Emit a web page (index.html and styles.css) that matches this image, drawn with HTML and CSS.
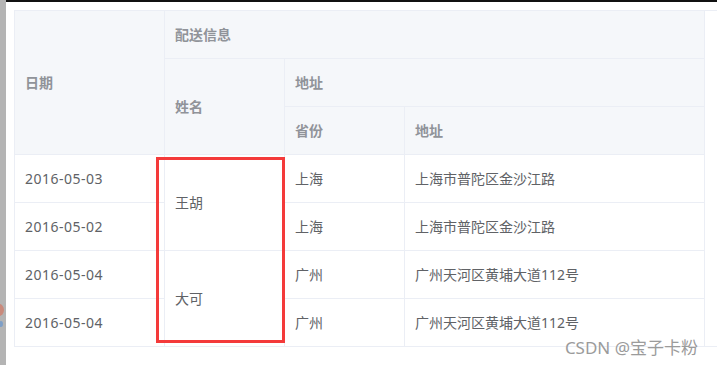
FILE: index.html
```html
<!DOCTYPE html>
<html lang="zh-CN">
<head>
    <meta charset="UTF-8">
    <meta name="viewport" content="width=device-width, initial-scale=1.0">
    <title>配送信息</title>
    <link rel="stylesheet" href="styles.css">
</head>
<body>
    <aside class="side">
        <span class="side-badge"></span>
    </aside>

    <div class="content">
        <div class="topbar"></div>

        <main class="page">
            <div class="table-wrap">
                <table class="data-table">
                    <colgroup>
                        <col class="col-date">
                        <col class="col-name">
                        <col class="col-province">
                        <col class="col-address">
                    </colgroup>
                    <thead>
                        <tr>
                            <th rowspan="3">日期</th>
                            <th colspan="3">配送信息</th>
                        </tr>
                        <tr>
                            <th rowspan="2">姓名</th>
                            <th colspan="2">地址</th>
                        </tr>
                        <tr>
                            <th>省份</th>
                            <th>地址</th>
                        </tr>
                    </thead>
                    <tbody>
                        <tr>
                            <td class="date">2016-05-03</td>
                            <td rowspan="2">王胡</td>
                            <td>上海</td>
                            <td>上海市普陀区金沙江路</td>
                        </tr>
                        <tr>
                            <td class="date">2016-05-02</td>
                            <td>上海</td>
                            <td>上海市普陀区金沙江路</td>
                        </tr>
                        <tr>
                            <td class="date">2016-05-04</td>
                            <td rowspan="2" class="last">大可</td>
                            <td>广州</td>
                            <td>广州天河区黄埔大道112号</td>
                        </tr>
                        <tr class="last-row">
                            <td class="date">2016-05-04</td>
                            <td>广州</td>
                            <td>广州天河区黄埔大道112号</td>
                        </tr>
                    </tbody>
                </table>
            </div>

            <!-- highlight around the merged name cells -->
            <div class="mark"></div>
        </main>
    </div>

    <div class="watermark">CSDN @宝子卡粉</div>
</body>
</html>
```

FILE: styles.css
```css
html, body {
    height: 100%;
}
body {
    margin: 0;
    display: flex;
    background: #fff;
    font-family: "Noto Sans", "Noto Sans CJK SC", sans-serif;
    font-size: 14px;
    color: #606266;
    overflow: hidden;
}
.side {
    position: relative;
    width: 6px;
    flex: none;
    background: #b4b4b4;
}
.side-badge {
    position: absolute;
    left: -6px;
    top: 304px;
    width: 10px;
    height: 12px;
    border-radius: 50%;
    background: #c98a7c;
    box-shadow: 2px 14px 0 -3px #7e9fc7;
}
.content {
    flex: 1;
    position: relative;
}
.topbar {
    height: 2px;
    background: #111;
}
.page {
    position: relative;
    padding: 8px 0 0 8px;
}
.table-wrap {
    border-top: 1px solid #ebeef5;
    border-bottom: 1px solid #ebeef5;
}
.data-table {
    width: 690px;
    table-layout: fixed;
    border-collapse: separate;
    border-spacing: 0;
    border-left: 1px solid #ebeef5;
}
.col-date { width: 150px; }
.col-name { width: 120px; }
.col-province { width: 120px; }
.col-address { width: 300px; }

.data-table th,
.data-table td {
    height: 47px;
    padding: 0 10px;
    text-align: left;
    vertical-align: middle;
    border-right: 1px solid #ebeef5;
    border-bottom: 1px solid #ebeef5;
    white-space: nowrap;
    line-height: 23px;
}
.data-table th {
    background: #f5f7fa;
    color: #909399;
    font-weight: bold;
}
.data-table td.date {
    letter-spacing: 0.5px;
}
.data-table td.last,
.data-table .last-row td {
    border-bottom: none;
}
.mark {
    position: absolute;
    left: 150px;
    top: 155px;
    width: 123px;
    height: 180px;
    border: 3px solid #f43a3a;
}
.watermark {
    position: absolute;
    right: 19px;
    bottom: 6px;
    font-size: 17px;
    color: #9b9b9b;
    text-shadow: 0 0 1px #fff;
}
```
